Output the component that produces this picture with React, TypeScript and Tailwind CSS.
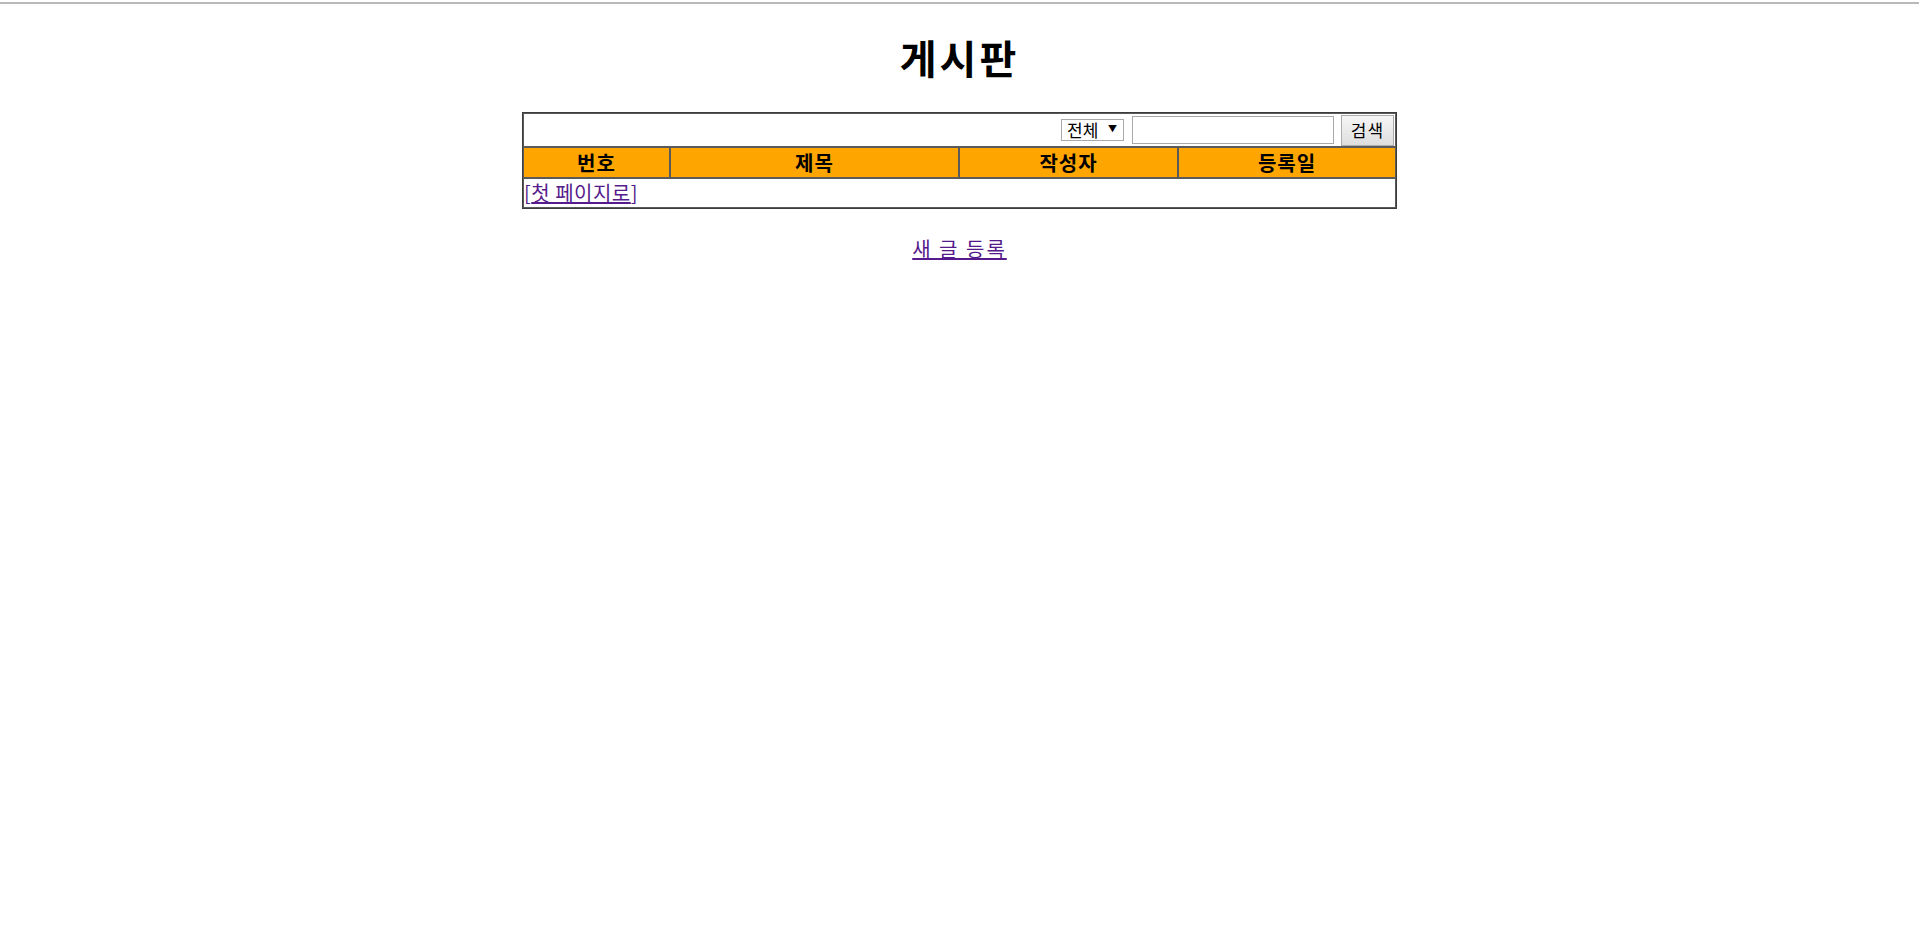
export default function App() {
  return (
    <div className="min-h-screen bg-white text-black font-['Noto_Sans_CJK_KR','Noto_Sans',sans-serif]">
      <div className="h-[2px]" />
      <div className="h-[2px] bg-[#b9b9b9]" />

      <h1 className="mt-[29px] mb-[31px] text-center text-[40px] font-bold leading-[48px] tracking-[3px]">게시판</h1>

      <table className="mx-auto w-[873px] table-fixed border-separate border-spacing-0 border border-[#3c3c3c]">
        <colgroup>
          <col className="w-[147px]" />
          <col className="w-[289px]" />
          <col className="w-[219px]" />
          <col className="w-[218px]" />
        </colgroup>
        <tbody>
          <tr>
            <td colSpan={4} className="h-[34px] border border-[#5a5a5a] p-0">
              <div className="flex items-center justify-end gap-[7px] pr-[1px]">
                <div className="relative">
                  <select className="h-[22px] w-[63px] appearance-none border border-[#a9a9a9] bg-white pl-[5px] text-[17px] leading-[20px] outline-none">
                    <option>전체</option>
                    <option>제목</option>
                    <option>작성자</option>
                  </select>
                  <span className="pointer-events-none absolute right-[7px] top-[3px] text-[9px] leading-[16px]">▼</span>
                </div>
                <input
                  type="text"
                  className="ml-[1px] h-[28px] w-[202px] border border-[#a9a9a9] bg-white px-1 text-[16px] outline-none"
                />
                <button className="h-[31px] w-[53px] border border-[#adadad] bg-gradient-to-b from-[#f6f6f6] to-[#dedede] text-[17px] leading-[20px] tracking-[1px]">
                  검색
                </button>
              </div>
            </td>
          </tr>
          <tr className="bg-[#ffa500]">
            <th className="h-[31px] border border-[#5a5a5a] p-0 text-[20px] font-bold leading-[26px] tracking-[1px]">번호</th>
            <th className="h-[31px] border border-[#5a5a5a] p-0 text-[20px] font-bold leading-[26px] tracking-[1px]">제목</th>
            <th className="h-[31px] border border-[#5a5a5a] p-0 text-[20px] font-bold leading-[26px] tracking-[1px]">작성자</th>
            <th className="h-[31px] border border-[#5a5a5a] p-0 text-[20px] font-bold leading-[26px] tracking-[1px]">등록일</th>
          </tr>
          <tr>
            <td colSpan={4} className="h-[30px] border border-[#5a5a5a] p-0 text-[20px] leading-[26px] tracking-[0.5px] text-[#551a8b]">
              [<a href="#" className="underline">첫 페이지로</a>]
            </td>
          </tr>
        </tbody>
      </table>

      <div className="mt-[27px] text-center">
        <a href="#" className="text-[20px] leading-[26px] tracking-[2px] text-[#551a8b] underline">
          새 글 등록
        </a>
      </div>
    </div>
  );
}
